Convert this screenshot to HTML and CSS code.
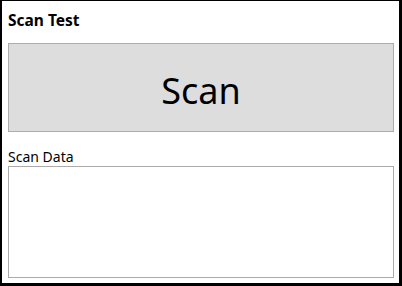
FILE: index.html
```html
<!DOCTYPE html>
<html>
<head>
<meta charset="utf-8">
<link rel="stylesheet" href="styles.css">
</head>
<body>
<div class="window">
  <h1 class="title">Scan Test</h1>
  <button class="scan-btn">Scan</button>
  <label class="field-label">Scan Data</label>
  <div class="data-box"></div>
</div>
</body>
</html>
```
FILE: styles.css
```css
html, body {
  margin: 0;
  padding: 0;
  background: #ffffff;
}
.window {
  box-sizing: border-box;
  width: 402px;
  height: 286px;
  border-style: solid;
  border-color: #000000;
  border-width: 1px 3px 3px 2px;
  padding: 0 5px 0 6px;
  display: flex;
  flex-direction: column;
  font-family: "Noto Sans", "Open Sans", sans-serif;
  color: #000000;
}
.title {
  margin: 9px 0 0 0;
  font-size: 15.5px;
  font-weight: 700;
  line-height: 20px;
  height: 20px;
}
.scan-btn {
  margin-top: 13px;
  height: 89px;
  background: #dddddd;
  border: 1px solid #adadad;
  font-family: inherit;
  font-size: 36px;
  font-weight: 400;
  color: #000000;
  padding: 5px 0 0 0;
}
.field-label {
  margin-top: 16px;
  font-size: 14px;
  line-height: 18px;
  height: 18px;
}
.data-box {
  margin-top: 0;
  height: 110px;
  border: 1px solid #ababab;
  background: #ffffff;
}
```
